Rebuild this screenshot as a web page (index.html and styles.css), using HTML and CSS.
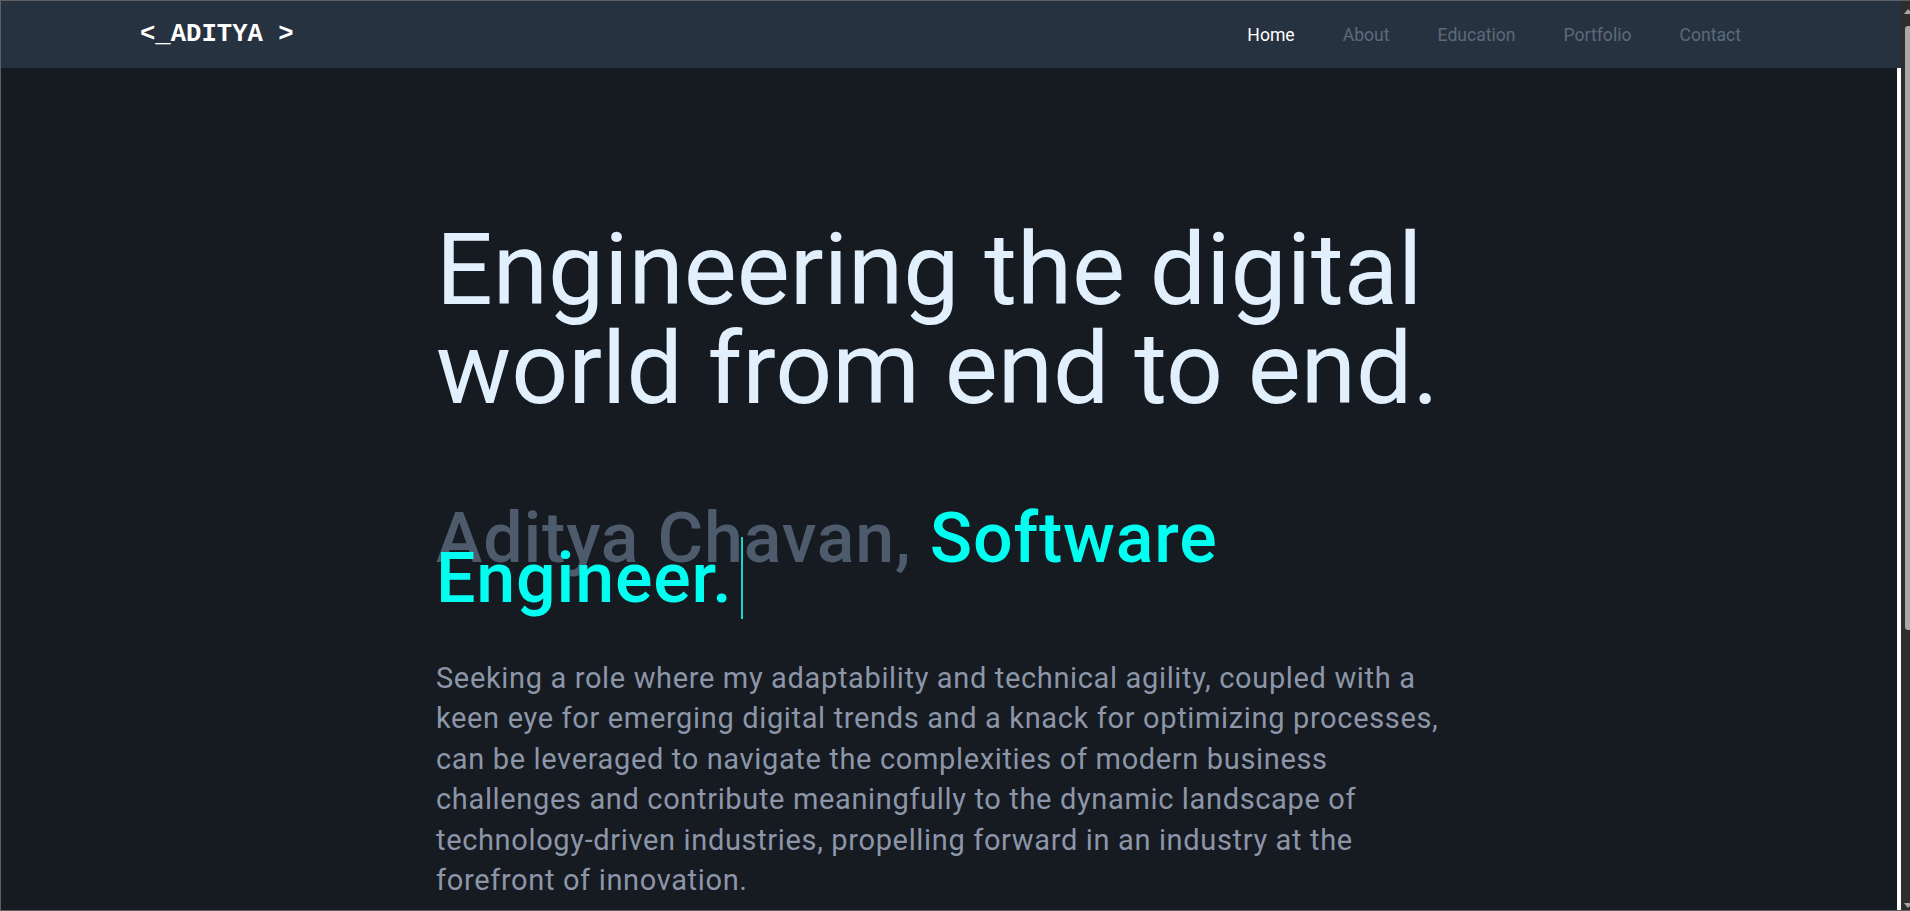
FILE: index.html
```html
<!DOCTYPE html>
<html lang="en">
<head>
<meta charset="utf-8">
<title>Aditya Chavan</title>
<link rel="stylesheet" href="styles.css">
</head>
<body>
<div class="frame">
  <div class="page">
    <header class="nav">
      <a class="logo" href="#">&lt;_ADITYA &gt;</a>
      <nav class="links">
        <a class="link active" href="#">Home</a>
        <a class="link" href="#">About</a>
        <a class="link" href="#">Education</a>
        <a class="link" href="#">Portfolio</a>
        <a class="link" href="#">Contact</a>
      </nav>
    </header>
    <main class="main">
      <section class="hero">
        <h1 class="title">Engineering the digital world from end to end.</h1>
        <h2 class="subtitle"><span class="name">Aditya Chavan, </span><span class="typed">Software Engineer.</span></h2>
        <p class="intro">Seeking a role where my adaptability and technical agility, coupled with a keen eye for emerging digital trends and a knack for optimizing processes, can be leveraged to navigate the complexities of modern business challenges and contribute meaningfully to the dynamic landscape of technology-driven industries, propelling forward in an industry at the forefront of innovation.</p>
      </section>
    </main>
  </div>
  <div class="scrollbar">
    <span class="arrow up"></span>
    <span class="thumb"></span>
    <span class="arrow down"></span>
  </div>
</div>
</body>
</html>
```
FILE: styles.css
```css
html, body {
  margin: 0;
  padding: 0;
  height: 100%;
  overflow: hidden;
}

body {
  font-family: Roboto, "Noto Sans", sans-serif;
  background: #5d5f63;
}

.frame {
  display: flex;
  height: 911px;
  box-sizing: border-box;
  border-top: 1px solid #5d5f63;
  border-left: 1px solid #5d5f63;
  border-bottom: 1px solid #5d5f63;
}

.page {
  flex: 1;
  display: flex;
  flex-direction: column;
  background: #ffffff;
  min-width: 0;
}

.nav {
  height: 67px;
  flex: none;
  background: #273240;
  display: flex;
  align-items: center;
  justify-content: space-between;
  padding: 0 160px 0 139px;
}

.logo {
  font-family: "Courier New", "Liberation Mono", monospace;
  font-weight: 700;
  font-size: 25.6px;
  color: #ffffff;
  text-decoration: none;
  white-space: pre;
}

.links {
  display: flex;
  gap: 48px;
}

.link {
  font-size: 17.6px;
  color: #5d6a79;
  text-decoration: none;
}

.link.active {
  color: #ffffff;
}

.main {
  flex: 1;
  background: #161a21;
  margin-right: 4px;
  padding-top: 152px;
}

.hero {
  max-width: 1026px;
  margin: 0 auto;
}

.title {
  margin: 0;
  font-size: 100px;
  line-height: 99px;
  font-weight: 400;
  color: #e2f0fe;
}

.subtitle {
  margin: 100px 0 0;
  font-size: 70px;
  line-height: 40px;
  font-weight: 500;
  letter-spacing: 0.8px;
}

.name {
  color: #4e5b6d;
}

.typed {
  color: #00fff1;
  padding-right: 8px;
  border-right: 2px solid #14d6cc;
}

.intro {
  margin: 60px 0 0;
  font-size: 29px;
  line-height: 40.4px;
  letter-spacing: 0.65px;
  color: #8c96a8;
}

.scrollbar {
  width: 9px;
  flex: none;
  background: #2e2e2e;
  position: relative;
}

.thumb {
  position: absolute;
  top: 25px;
  left: 4px;
  right: 0;
  height: 604px;
  background: #a9a9a9;
  border-radius: 3px 0 0 3px;
}

.arrow {
  position: absolute;
  left: 3px;
  width: 0;
  height: 0;
  border-left: 4px solid transparent;
  border-right: 4px solid transparent;
}

.arrow.up {
  top: 8px;
  border-bottom: 5px solid #a9a9a9;
}

.arrow.down {
  bottom: 2px;
  border-top: 5px solid #a9a9a9;
}
```
